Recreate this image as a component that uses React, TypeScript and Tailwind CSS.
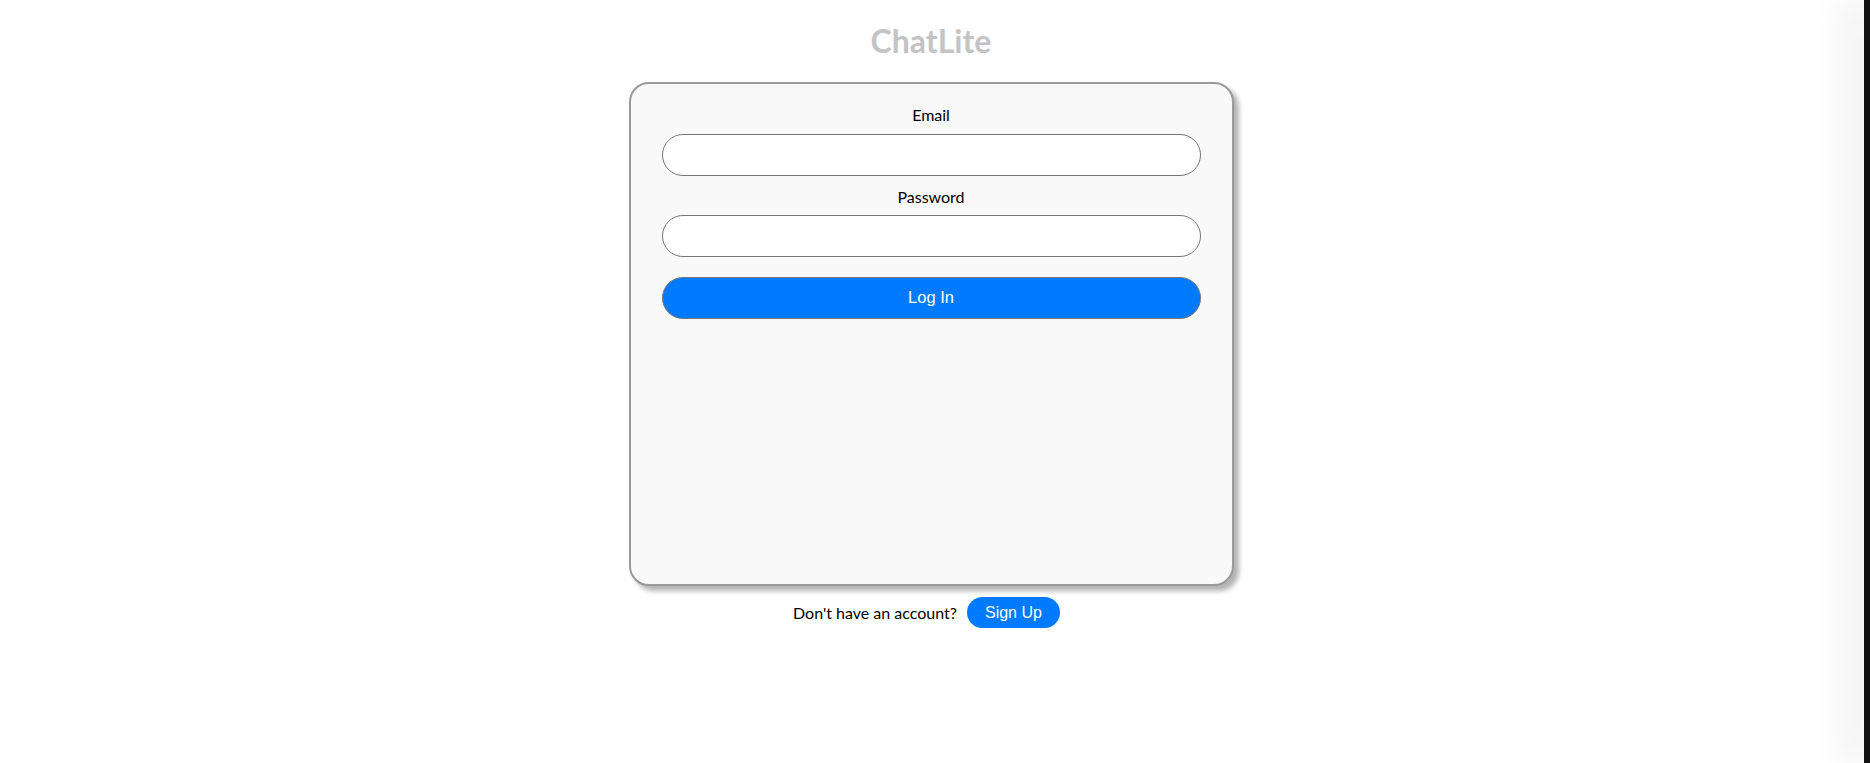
export default function App() {
  return (
    <div className="flex h-screen w-full overflow-hidden bg-white">
      <main className="flex min-w-0 flex-1 flex-col items-center pr-[2px] font-['Lato',sans-serif] text-black">
        <h1 className="mt-[22px] text-[32px] font-bold leading-[1.2] text-[#c4c4c4]">ChatLite</h1>

        <div className="mt-[22px] flex h-[504px] w-[605px] flex-col rounded-[20px] border-2 border-[#9a9a9a] bg-[#f9f9f9] px-[31px] pt-[21px] shadow-[5px_5px_5px_rgba(0,0,0,0.3)]">
          <label className="text-center text-[16px] leading-[1.2]">Email</label>
          <input
            type="email"
            className="mt-[9px] h-[42px] w-full rounded-full border border-[#777] bg-white px-4 outline-none"
          />
          <label className="mt-[11px] text-center text-[16px] leading-[1.2]">Password</label>
          <input
            type="password"
            className="mt-[9px] h-[42px] w-full rounded-full border border-[#777] bg-white px-4 outline-none"
          />
          <button className="mt-[20px] h-[42px] w-full rounded-full border border-[#777] bg-[#007bff] font-['Liberation_Sans',Arial,sans-serif] text-[16.5px] text-white">
            Log In
          </button>
        </div>

        <div className="mt-[11px] mr-[9px] flex items-center gap-[10px]">
          <span className="text-[16px]">Don&apos;t have an account?</span>
          <button className="h-[31px] w-[93px] rounded-full bg-[#007bff] font-['Liberation_Sans',Arial,sans-serif] text-[16px] text-white">
            Sign Up
          </button>
        </div>
      </main>
      <aside className="relative z-10 h-full w-[6px] shrink-0 bg-[#121214] shadow-[-10px_0_36px_rgba(0,0,0,0.3)]" />
    </div>
  );
}
